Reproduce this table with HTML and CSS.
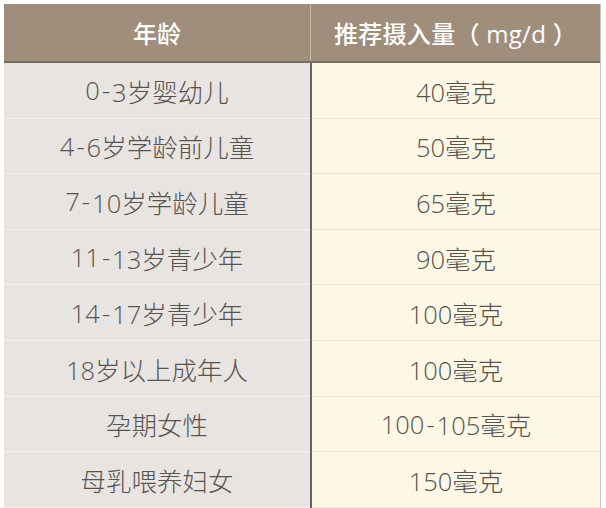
FILE: index.html
```html
<!DOCTYPE html>
<html>
<head>
<meta charset="utf-8">
<link rel="stylesheet" href="styles.css">
</head>
<body>
<div class="table">
  <div class="head">
    <div class="hc left">年龄</div>
    <div class="hc right">推荐摄入量（ mg/d ）</div>
  </div>
  <div class="body">
    <div class="col left">
      <div class="cell">0<span class="dash">-</span>3岁婴幼儿</div>
      <div class="cell">4<span class="dash">-</span>6岁学龄前儿童</div>
      <div class="cell">7<span class="dash">-</span>10岁学龄儿童</div>
      <div class="cell">11<span class="dash">-</span>13岁青少年</div>
      <div class="cell">14<span class="dash">-</span>17岁青少年</div>
      <div class="cell">18岁以上成年人</div>
      <div class="cell">孕期女性</div>
      <div class="cell">母乳喂养妇女</div>
    </div>
    <div class="col right">
      <div class="cell">40毫克</div>
      <div class="cell">50毫克</div>
      <div class="cell">65毫克</div>
      <div class="cell">90毫克</div>
      <div class="cell">100毫克</div>
      <div class="cell">100毫克</div>
      <div class="cell">100<span class="dash">-</span>105毫克</div>
      <div class="cell">150毫克</div>
    </div>
  </div>
</div>
</body>
</html>
```

FILE: styles.css
```css
html, body {
  margin: 0;
  padding: 0;
  background: #ffffff;
}
body {
  font-family: "Open Sans", "Noto Sans CJK SC", sans-serif;
  height: 508px;
  overflow: hidden;
}
.table {
  margin: 4px 0 0 4px;
  width: 596px;
  border-right: 1px solid #c9c6c2;
}
.head {
  display: flex;
  height: 57px;
  background: #a08e7d;
  border-bottom: 2px solid #7b6d5f;
}
.hc {
  display: flex;
  align-items: center;
  justify-content: center;
  padding-bottom: 1px;
  box-sizing: border-box;
  color: #ffffff;
  font-size: 24px;
  font-weight: 500;
}
.hc.left {
  width: 307px;
  border-right: 1px solid #c4b6a8;
}
.hc.right {
  flex: 1;
  letter-spacing: 0.3px;
}
.body {
  display: flex;
}
.col {
  display: flex;
  flex-direction: column;
}
.col.left {
  width: 306px;
  background: #e8e4e2;
  border-right: 2px solid #6c6356;
}
.col.right {
  flex: 1;
  background: #fdf7e6;
}
.cell {
  height: 55.6px;
  box-sizing: border-box;
  display: flex;
  align-items: center;
  justify-content: center;
  font-size: 25.5px;
  font-weight: 300;
  color: #575350;
  border-bottom: 1px solid #f3f0ee;
}
.col.right .cell {
  border-bottom-color: #ede6d5;
}
.dash {
  margin: 0 2px;
}
```
